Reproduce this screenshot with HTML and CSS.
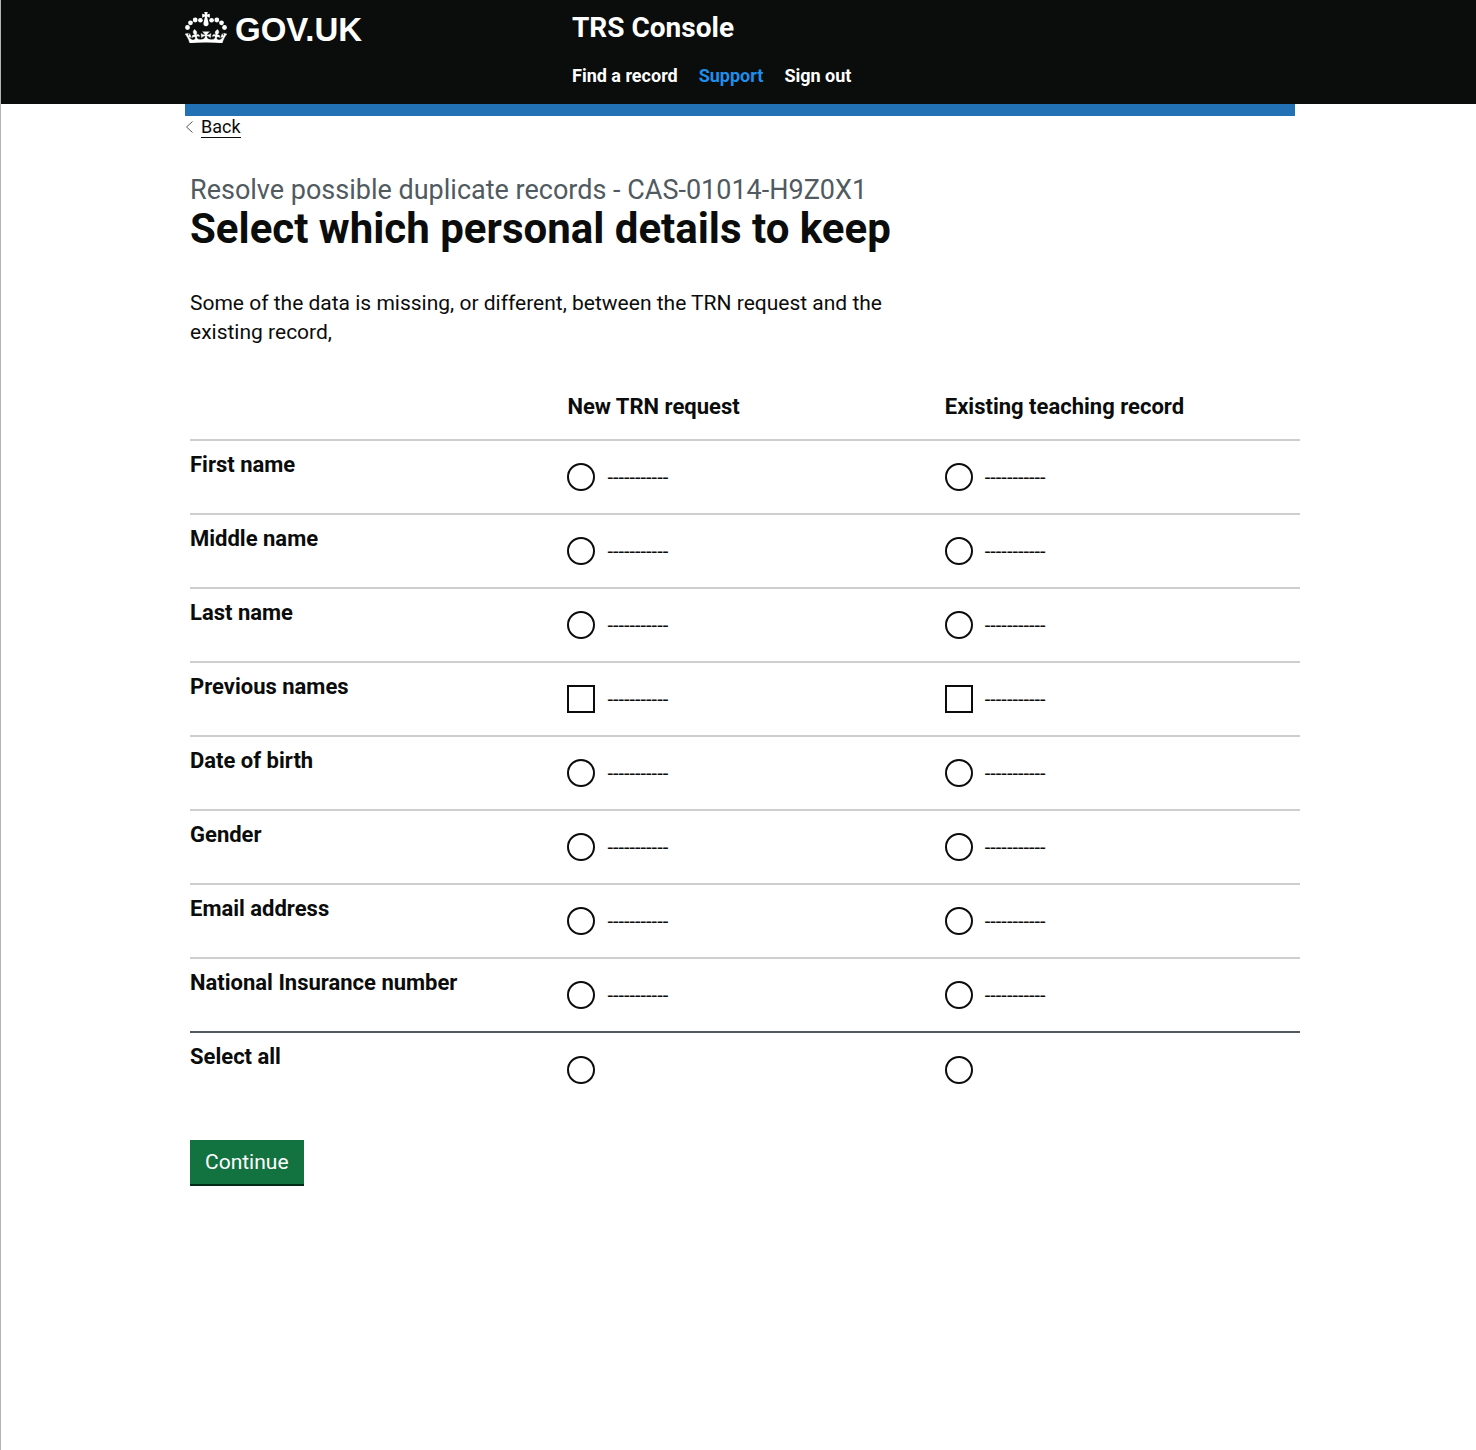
FILE: index.html
```html
<!DOCTYPE html>
<html lang="en">
<head>
<meta charset="utf-8">
<meta name="viewport" content="width=device-width, initial-scale=1">
<title>Select which personal details to keep - TRS Console</title>
<link rel="stylesheet" href="styles.css">
</head>
<body>
<header class="header">
  <div class="header-inner">
    <a class="logo" href="#">
      <svg class="crown" viewBox="0 0 42 31" aria-hidden="true">
        <circle cx="2.500" cy="15.500" r="2.400"/><circle cx="5.500" cy="10.800" r="2.400"/><circle cx="10.200" cy="8" r="2.400"/><circle cx="15.400" cy="8.300" r="2.300"/>
        <circle cx="26.600" cy="8.300" r="2.300"/><circle cx="31.800" cy="8" r="2.400"/><circle cx="36.500" cy="10.800" r="2.400"/><circle cx="39.500" cy="15.500" r="2.400"/>
        <path d="M19.200 0h3.600l-.8 2.500 2.800-.8v4l-2.800-1.200 1.500 6.500a2.600 2.600 0 1 1-5 0L20 4.500l-2.800 1.200v-4l2.800.8z"/>
        <path stroke="currentColor" stroke-width=".6" transform="scale(.66 .52)" d="M37,37.9s-3.4,3.8-4.1,6.1c2.2,0,4.2-.5,6.4-2.8l-.7,8.5c-2-2.8-4.4-4.1-5.7-3.8.1,3.1.5,6.7,5.8,7.2,3.7.3,6.7-1.5,7-3.8.4-2.6-2-4.3-3.7-1.6-1.4-4.5,2.4-6.1,4.9-3.2-1.9-4.5-1.8-7.7,2.4-10.9,3,4,2.6,7.3-1.2,11.1,2.4-1.3,6.2,0,4,4.6-1.2-2.8-3.7-2.2-4.2.2-.3,1.7.7,3.7,3,4.2,1.9.3,4.7-.9,7-5.9-1.3,0-2.4.7-3.9,1.7l2.4-8c.6,2.3,1.4,3.7,2.2,4.5.6-1.6.5-2.8,0-5.3l5,1.8c-2.6,3.6-5.2,8.7-7.3,17.5-7.4-1.1-15.7-1.7-24.5-1.7h0c-8.8,0-17.1.6-24.5,1.7-2.1-8.9-4.7-13.9-7.3-17.5l5-1.8c-.5,2.5-.6,3.7,0,5.3.8-.8,1.6-2.3,2.2-4.5l2.4,8c-1.5-1-2.6-1.7-3.9-1.7,2.3,5,5.2,6.2,7,5.9,2.3-.4,3.3-2.4,3-4.2-.5-2.4-3-3.1-4.2-.2-2.2-4.6,1.6-6,4-4.6-3.7-3.7-4.2-7.1-1.2-11.1,4.2,3.2,4.3,6.4,2.4,10.9,2.5-2.8,6.3-1.3,4.9,3.2-1.8-2.7-4.1-1-3.7,1.6.3,2.3,3.3,4.1,7,3.8,5.4-.5,5.7-4.2,5.8-7.2-1.3-.2-3.7,1-5.7,3.8l-.7-8.5c2.2,2.3,4.2,2.7,6.4,2.8-.7-2.3-4.1-6.1-4.1-6.1h10.6Z"/>
      </svg>
      <span>GOV.UK</span>
    </a>
    <div>
      <a class="service-name" href="#">TRS Console</a>
      <nav class="nav" aria-label="Menu">
        <a href="#">Find a record</a>
        <a class="active" href="#" aria-current="page">Support</a>
        <a href="#">Sign out</a>
      </nav>
    </div>
  </div>
</header>
<div class="phase">
  <a class="back" href="#"><svg viewBox="0 0 8 14" aria-hidden="true"><path d="M7.500 1.500 1.500 7 7.500 12.500"/></svg><span>Back</span></a>
</div>
<main class="main">
  <p class="caption">Resolve possible duplicate records - CAS-01014-H9Z0X1</p>
  <h1>Select which personal details to keep</h1>
  <p class="intro">Some of the data is missing, or different, between the TRN request and the existing record,</p>
  <form action="#">
    <table class="details">
      <thead>
        <tr><td></td><th scope="col">New TRN request</th><th scope="col">Existing teaching record</th></tr>
      </thead>
      <tbody>
        <tr><th scope="row">First name</th><td><label><input type="radio" name="first"><span>-----------</span></label></td><td><label><input type="radio" name="first"><span>-----------</span></label></td></tr>
        <tr><th scope="row">Middle name</th><td><label><input type="radio" name="middle"><span>-----------</span></label></td><td><label><input type="radio" name="middle"><span>-----------</span></label></td></tr>
        <tr><th scope="row">Last name</th><td><label><input type="radio" name="last"><span>-----------</span></label></td><td><label><input type="radio" name="last"><span>-----------</span></label></td></tr>
        <tr><th scope="row">Previous names</th><td><label><input type="checkbox" name="previous"><span>-----------</span></label></td><td><label><input type="checkbox" name="previous"><span>-----------</span></label></td></tr>
        <tr><th scope="row">Date of birth</th><td><label><input type="radio" name="dob"><span>-----------</span></label></td><td><label><input type="radio" name="dob"><span>-----------</span></label></td></tr>
        <tr><th scope="row">Gender</th><td><label><input type="radio" name="gender"><span>-----------</span></label></td><td><label><input type="radio" name="gender"><span>-----------</span></label></td></tr>
        <tr><th scope="row">Email address</th><td><label><input type="radio" name="email"><span>-----------</span></label></td><td><label><input type="radio" name="email"><span>-----------</span></label></td></tr>
        <tr><th scope="row">National Insurance number</th><td><label><input type="radio" name="nino"><span>-----------</span></label></td><td><label><input type="radio" name="nino"><span>-----------</span></label></td></tr>
      </tbody>
      <tfoot>
        <tr><th scope="row">Select all</th><td><label><input type="radio" name="all" aria-label="Select all from new TRN request"></label></td><td><label><input type="radio" name="all" aria-label="Select all from existing teaching record"></label></td></tr>
      </tfoot>
    </table>
    <button class="button" type="submit">Continue</button>
  </form>
</main>
</body>
</html>
```
FILE: styles.css
```css
* { box-sizing: border-box; }

body {
  margin: 0;
  min-height: 100vh;
  border-left: 1px solid #b1b4b6;
  background: #fff;
  color: #0b0c0c;
  font: 21px/29px Roboto, "Liberation Sans", sans-serif;
}

.header {
  background: #0b0c0c;
  color: #fff;
}

.header a { color: inherit; text-decoration: none; }

.header-inner,
.phase {
  max-width: 1113px;
  margin: 0 auto;
  padding-left: 3px;
}

.header-inner {
  display: grid;
  grid-template-columns: 387px 1fr;
  padding-top: 12px;
  padding-bottom: 16px;
}

.logo {
  display: flex;
  align-items: flex-start;
  align-self: start;
  gap: 8px;
  font: bold 33px/36px "Liberation Sans", Arial, sans-serif;
}

.crown {
  width: 42px;
  height: 31px;
  fill: currentColor;
}

.service-name {
  display: block;
  font-size: 28px;
  font-weight: 700;
  line-height: 32px;
}

.nav {
  display: flex;
  gap: 21px;
  margin-top: 20px;
  font-size: 18px;
  font-weight: 700;
  line-height: 24px;
}

.header .active { color: #1d8feb; }

.phase {
  display: flow-root;
}

.phase::before {
  content: "";
  display: block;
  height: 12px;
  background: #2271b5;
}

.back {
  display: flex;
  align-items: center;
  gap: 8px;
  width: fit-content;
  color: inherit;
  font-size: 18px;
  line-height: 21px;
  text-decoration: none;
}

.back svg {
  width: 8px;
  height: 14px;
  fill: none;
  stroke: #505a5f;
}

.back span { border-bottom: 1px solid; }

.main {
  max-width: 1123px;
  margin: 0 auto;
  padding: 36px 0 40px 13px;
}

.caption {
  margin: 0;
  color: #505a5f;
  font-size: 27px;
  line-height: 32px;
}

h1 {
  margin: 0;
  font-size: 42px;
  font-weight: 700;
  line-height: 46px;
}

.intro {
  max-width: 720px;
  margin: 37px 0 45px;
}

.details {
  width: 100%;
  border-collapse: collapse;
  table-layout: fixed;
  margin-bottom: 34px;
}

.details th {
  padding: 0;
  font-size: 22px;
  font-weight: 700;
  text-align: left;
  vertical-align: top;
}

.details td { padding: 0; }

.details thead th { height: 48px; }

.details thead td,
.details thead th:nth-child(2) { width: 34%; }

.details tbody tr { border-top: 2px solid #cecece; }
.details tfoot tr { border-top: 2px solid #505a5f; }

.details tbody tr,
.details tfoot tr { height: 74px; }

.details tbody th,
.details tfoot th { padding-top: 9px; }

.details label {
  display: flex;
  align-items: center;
  gap: 12px;
  font-size: 20px;
}

.details input {
  appearance: none;
  width: 28px;
  height: 28px;
  margin: 0;
  border: 2px solid #0b0c0c;
  background: #fff;
}

.details input[type="radio"] { border-radius: 50%; }

.button {
  padding: 8px 15px;
  border: 0;
  border-bottom: 2px solid #002d18;
  background: #127240;
  color: #fff;
  font: inherit;
  line-height: 28px;
}
```
